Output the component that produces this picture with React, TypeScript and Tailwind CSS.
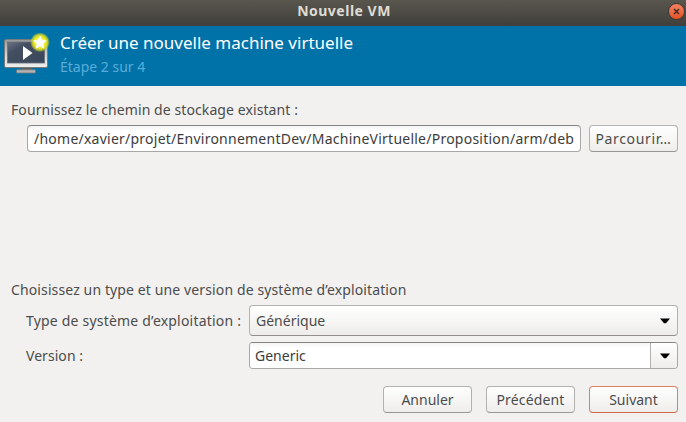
import type { ReactNode } from 'react';

function Button({ children, primary = false }: { children: ReactNode; primary?: boolean }) {
  return (
    <button
      className={`flex h-[27px] w-[89px] shrink-0 items-center justify-center whitespace-nowrap rounded-[4px] border bg-linear-to-b from-white to-[#eeedeb] text-[#4c4c4c] ${
        primary ? 'border-[#d98263] border-b-[#cf6a47]' : 'border-[#b3b2b0] border-b-[#989795]'
      }`}
    >
      {children}
    </button>
  );
}

function Arrow() {
  return (
    <svg width="10" height="6" viewBox="0 0 10 6" className="shrink-0">
      <path d="M0 0.5h10L6 5.2H4z" fill="#000" />
    </svg>
  );
}

function MonitorIcon() {
  return (
    <svg width="46" height="42" viewBox="0 0 46 42" className="shrink-0 overflow-visible">
      <defs>
        <linearGradient id="frame" x1="0" y1="0" x2="0" y2="1">
          <stop offset="0" stopColor="#999a98" />
          <stop offset="0.5" stopColor="#cfcfce" />
          <stop offset="1" stopColor="#f0f0ef" />
        </linearGradient>
        <linearGradient id="screen" x1="0" y1="0" x2="1" y2="1">
          <stop offset="0" stopColor="#6d7583" />
          <stop offset="0.3" stopColor="#434e61" />
          <stop offset="1" stopColor="#3b475a" />
        </linearGradient>
        <radialGradient id="glow">
          <stop offset="0" stopColor="#f8f43c" />
          <stop offset="0.6" stopColor="#ebe920" />
          <stop offset="0.8" stopColor="#c9d52b" stopOpacity="0.8" />
          <stop offset="1" stopColor="#a9c52b" stopOpacity="0" />
        </radialGradient>
      </defs>
      <path d="M17 34.5h11v3.5H17z" fill="#5d5e5d" />
      <rect x="12.5" y="37.8" width="19" height="3.2" rx="1" fill="#b5b4b3" stroke="#777876" strokeWidth="0.8" />
      <rect x="0.5" y="7.5" width="43" height="28" rx="1.5" fill="url(#frame)" stroke="#777a79" />
      <rect x="3.5" y="10" width="37" height="21" fill="url(#screen)" stroke="#667081" strokeWidth="0.8" />
      <path d="M19 14l9.5 7-9.5 7z" fill="#fff" />
      <circle cx="36" cy="10.3" r="10" fill="url(#glow)" />
      <path
        d="M36 4l1.9 4 4.3.7-3.1 3.1.7 4.4-3.8-2.1-3.9 2.1.8-4.4-3.2-3.1 4.4-.7z"
        fill="#fff"
        stroke="#fff"
        strokeWidth="0.7"
        strokeLinejoin="round"
      />
    </svg>
  );
}

export default function App() {
  return (
    <div className="flex h-[422px] w-[686px] flex-col overflow-hidden bg-[#f2f1f0] font-['Noto_Sans',sans-serif] text-[14px] leading-[20px] whitespace-nowrap text-[#4c4c4c]">
      <header className="grid h-[26px] shrink-0 grid-cols-[1fr_auto_1fr] items-center bg-linear-to-b from-[#59564e] to-[#403f3a] pr-px">
        <span />
        <h1 className="pb-[4px] pl-[3px] text-[14px] font-bold tracking-[0.5px] text-[#dfdbd2]">Nouvelle VM</h1>
        <button aria-label="Fermer" className="mb-[4px] flex size-[17px] items-center justify-center justify-self-end rounded-full border border-[#393832] bg-linear-to-b from-[#f58261] to-[#e4521f]">
          <svg width="7" height="7" viewBox="0 0 7 7">
            <path d="M1 1l5 5M6 1L1 6" stroke="#3b2921" strokeWidth="1.4" />
          </svg>
        </button>
      </header>
      <section className="flex h-[60px] shrink-0 gap-[10px] bg-[#0072a8] pt-[6px] pl-[4px]">
        <MonitorIcon />
        <div className="pt-px">
          <h2 className="text-[17px] leading-[20px] text-white">Créer une nouvelle machine virtuelle</h2>
          <p className="mt-[4px] text-[#59addc]">Étape 2 sur 4</p>
        </div>
      </section>
      <main className="flex grow flex-col pt-[14px] pr-[8px] pl-[11px]">
        <p className="tracking-[0.09px]">Fournissez le chemin de stockage existant :</p>
        <div className="mt-[5px] flex gap-[8px] pl-[16px]">
          <div className="flex h-[27px] w-[554px] items-center overflow-hidden rounded-[4px] border border-[#a9a8a6] border-t-[#858482] bg-linear-to-b from-[#f4f4f4] to-white to-20% pl-[6px] tracking-[0.24px] text-[#3c3c3c]">
            /home/xavier/projet/EnvironnementDev/MachineVirtuelle/Proposition/arm/deb
          </div>
          <Button><span className="tracking-[0.65px]">Parcourir…</span></Button>
        </div>
        <p className="mt-[128px] tracking-[0.12px]">Choisissez un type et une version de système d’exploitation</p>
        <div className="mt-[5px] grid grid-cols-[223px_1fr] items-center gap-y-[6px] pl-[15px]">
          <label className="tracking-[0.2px]">Type de système d’exploitation :</label>
          <div className="flex h-[31px] items-center justify-between rounded-[4px] border border-[#b3b2b0] border-b-[#91908e] bg-linear-to-b from-white to-[#eeedeb] pr-[7px] pl-[6px]">
            Générique
            <Arrow />
          </div>
          <label className="tracking-[0.05px]">Version :</label>
          <div className="flex h-[27px] overflow-hidden rounded-[4px] border border-[#a9a8a6] border-t-[#858482]">
            <div className="flex grow items-center bg-linear-to-b from-[#f4f4f4] to-white to-20% pl-[5px] text-[#3c3c3c]">Generic</div>
            <div className="flex w-[27px] items-center justify-center border-l border-[#b3b2b0] bg-linear-to-b from-white to-[#eeedeb] pl-[2px]">
              <Arrow />
            </div>
          </div>
        </div>
        <footer className="mt-[17px] flex justify-end gap-[14px]">
          <Button>Annuler</Button>
          <Button><span className="tracking-[0.15px]">Précédent</span></Button>
          <Button primary>Suivant</Button>
        </footer>
      </main>
    </div>
  );
}
